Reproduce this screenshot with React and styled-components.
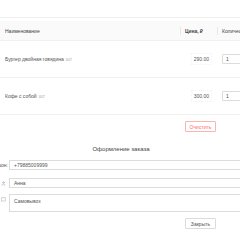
import React from "react";
import styled, { createGlobalStyle } from "styled-components";
import { User, MessageSquare } from "lucide-react";

const Global = createGlobalStyle`
  *, *::before, *::after {
    box-sizing: border-box;
  }
  html, body {
    margin: 0;
    padding: 0;
    background: #fff;
    overflow: hidden;
  }
  body {
    font-family: "Liberation Sans", Arial, sans-serif;
    color: #555;
  }
`;

const Page = styled.div`
  width: 240px;
  height: 240px;
  overflow: hidden;
  display: flex;
  flex-direction: column;
`;

const TopBar = styled.div`
  height: 18px;
  border-bottom: 1px solid #f0f0f0;
  flex-shrink: 0;
`;

const TableWrap = styled.div`
  margin-top: 3px;
  width: 240px;
  overflow: hidden;
`;

const Table = styled.div`
  width: 280px;
`;

const Row = styled.div`
  display: grid;
  grid-template-columns: 180px 37px 63px;
  align-items: center;
  height: ${(p) => p.$h}px;
  background: ${(p) => (p.$head ? "#fafafa" : "#fff")};
  border-bottom: 1px solid #f0f0f0;
  font-size: 5px;
`;

const Cell = styled.div`
  position: relative;
  padding: 0 5px;
  display: flex;
  align-items: center;
  justify-content: ${(p) => (p.$right ? "flex-end" : "flex-start")};
  white-space: nowrap;
  font-weight: ${(p) => (p.$bold ? 700 : 400)};
  color: ${(p) => (p.$head ? "#444" : "#555")};

  ${(p) =>
    p.$sep &&
    `&::before {
      content: "";
      position: absolute;
      left: 0;
      top: 50%;
      width: 1px;
      height: 8px;
      margin-top: -4px;
      background: #e8e8e8;
    }`}
`;

const Unit = styled.span`
  color: #b0b0b0;
  margin-left: 2px;
`;

const Price = styled.span`
  padding: 2px 2px;
  border: 1px dotted #f3f3f3;
`;

const QtyInput = styled.div`
  width: 50px;
  height: 10px;
  border: 1px solid #dcdcdc;
  border-radius: 1px;
  display: flex;
  align-items: center;
  padding-left: 3px;
  color: #555;
`;

const Actions = styled.div`
  display: flex;
  justify-content: flex-end;
  padding-right: 24px;
  margin-top: ${(p) => p.$mt}px;
`;

const Button = styled.button`
  font-family: inherit;
  font-size: 5px;
  height: 11px;
  width: 31px;
  padding: 0;
  background: #fff;
  border-radius: 1px;
  border: 1px solid ${(p) => (p.$danger ? "#ffb3b0" : "#dcdcdc")};
  color: ${(p) => (p.$danger ? "#ff6b6b" : "#555")};
  cursor: pointer;
`;

const Title = styled.div`
  margin-top: 14px;
  text-align: center;
  font-size: 6px;
  line-height: 7px;
  color: #444;
  padding-left: 2px;
`;

const Form = styled.div`
  display: flex;
  flex-direction: column;
  margin-top: 7px;
`;

const FormRow = styled.div`
  display: flex;
  align-items: ${(p) => (p.$top ? "flex-start" : "center")};
  margin-bottom: ${(p) => p.$mb}px;
`;

const Label = styled.div`
  width: 8px;
  flex-shrink: 0;
  display: flex;
  justify-content: flex-end;
  align-items: center;
  overflow: hidden;
  white-space: nowrap;
  font-size: 5px;
  color: #555;
  margin-right: 1px;
`;

const IconBox = styled.div`
  width: 8px;
  flex-shrink: 0;
  display: flex;
  justify-content: flex-start;
  padding-left: 1px;
  padding-top: ${(p) => (p.$top ? 3 : 0)}px;
  margin-right: 1px;
  color: #888;
`;

const Field = styled.div`
  flex: 1;
  height: ${(p) => p.$h}px;
  border: 1px solid #dcdcdc;
  border-right: none;
  font-size: 5px;
  color: #555;
  display: flex;
  align-items: ${(p) => (p.$area ? "flex-start" : "center")};
  padding: ${(p) => (p.$area ? "3px 4px" : "0 4px")};
`;

const items = [
  { name: "Бургер двойная говядина", price: "290.00", qty: 1 },
  { name: "Кофе с собой", price: "300.00", qty: 1 },
];

export default function App() {
  return (
    <Page>
      <Global />
      <TopBar />
      <TableWrap>
        <Table>
          <Row $head $h={20}>
            <Cell $head>Наименование</Cell>
            <Cell $head $sep $bold>Цена, ₽</Cell>
            <Cell $head $sep>Количество</Cell>
          </Row>
          {items.map((it) => (
            <Row key={it.name} $h={37}>
              <Cell>
                {it.name}
                <Unit>шт</Unit>
              </Cell>
              <Cell $right>
                <Price>{it.price}</Price>
              </Cell>
              <Cell>
                <QtyInput>{it.qty}</QtyInput>
              </Cell>
            </Row>
          ))}
        </Table>
      </TableWrap>
      <Actions $mt={6}>
        <Button $danger>Очистить</Button>
      </Actions>
      <Title>Оформление заказа</Title>
      <Form>
        <FormRow $mb={8}>
          <Label>Телефон:</Label>
          <Field $h={10}>+79885009999</Field>
        </FormRow>
        <FormRow $mb={6}>
          <IconBox>
            <User size={5} strokeWidth={1.8} />
          </IconBox>
          <Field $h={10}>Анна</Field>
        </FormRow>
        <FormRow $top $mb={0}>
          <IconBox $top>
            <MessageSquare size={5} strokeWidth={1.8} />
          </IconBox>
          <Field $h={18} $area>
            Самовывоз
          </Field>
        </FormRow>
      </Form>
      <Actions $mt={6}>
        <Button>Закрыть</Button>
      </Actions>
    </Page>
  );
}
